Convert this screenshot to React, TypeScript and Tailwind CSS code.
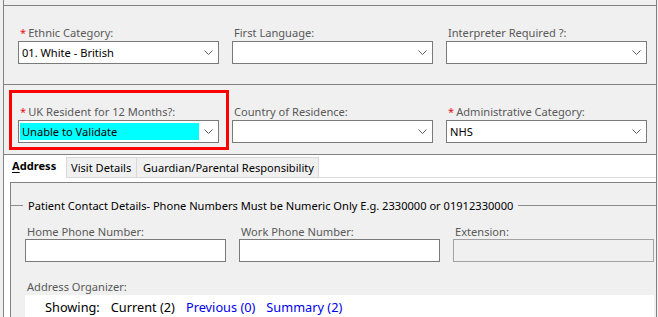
import React from "react";

function Chevron() {
  return (
    <svg width="9" height="5" viewBox="0 0 9 5" className="shrink-0">
      <polyline points="0.5,0.5 4.5,4.5 8.5,0.5" fill="none" stroke="#606060" strokeWidth="1" />
    </svg>
  );
}

function SelectField({
  label,
  required,
  value,
  highlight,
}: {
  label: string;
  required?: boolean;
  value?: string;
  highlight?: boolean;
}) {
  return (
    <div className="flex flex-col">
      <div className="h-[15px] leading-[15px] pl-[2px] text-[#595959] whitespace-nowrap">
        {required && <span className="text-[#e81123] mr-[2px]">*</span>}
        {label}
      </div>
      <div className="mt-[1px] h-[23px] border border-[#7a7a7a] bg-white flex items-center">
        <div
          className={
            "ml-[1px] w-[179px] h-[17px] leading-[17px] pl-[2px] text-black whitespace-nowrap " +
            (highlight ? "bg-[#00ffff]" : "")
          }
        >
          {value}
        </div>
        <div className="flex-1 flex justify-center">
          <Chevron />
        </div>
      </div>
    </div>
  );
}

function TextField({ label, disabled }: { label: string; disabled?: boolean }) {
  return (
    <div className="flex flex-col">
      <div className="h-[15px] leading-[15px] pl-[2px] text-[#595959] whitespace-nowrap">{label}</div>
      <div
        className={
          "h-[23px] border " +
          (disabled ? "bg-[#f0f0f0] border-[#a3a3a3]" : "bg-white border-[#7a7a7a]")
        }
      />
    </div>
  );
}

export default function App() {
  return (
    <div className="w-[658px] h-[317px] overflow-hidden bg-[#f0f0f0] font-['Noto_Sans',sans-serif] text-[11.1px]">
      <div className="ml-[3px] w-[654px] h-full border-x border-[#828282] pt-[5px] flex flex-col">
        {/* row 1 */}
        <div className="h-[79px] shrink-0 border-t border-[#828282] pl-[14px] pt-[19px] grid grid-cols-[201px_201px_201px] gap-x-[13px] content-start">
          <SelectField label="Ethnic Category:" required value="01. White - British" />
          <SelectField label="First Language:" />
          <SelectField label="Interpreter Required ?:" />
        </div>

        {/* row 2 */}
        <div className="h-[70px] shrink-0 border-t border-[#828282] pl-[14px] pt-[19px] grid grid-cols-[201px_201px_201px] gap-x-[13px] content-start">
          <div className="relative">
            <SelectField label="UK Resident for 12 Months?:" required value="Unable to Validate" highlight />
            <div className="absolute left-[-9px] right-[-10px] top-[-14px] bottom-[-7px] border-[3px] border-[#ff0000] pointer-events-none" />
          </div>
          <SelectField label="Country of Residence:" />
          <SelectField label="Administrative Category:" required value="NHS" />
        </div>

        {/* tabs */}
        <div className="flex-1 border-t border-[#828282] bg-white flex flex-col">
          <div className="h-[23px] shrink-0 flex items-end">
            <div className="w-[62px] h-full bg-white pl-[8px] leading-[21px] font-bold text-black">
              <span className="underline underline-offset-2">A</span>ddress
            </div>
            <div className="h-[21px] border border-[#d9d9d9] bg-[#f0f0f0] px-[4px] leading-[19px] text-black whitespace-nowrap w-[71px]">
              Visit Details
            </div>
            <div className="h-[21px] border border-l-0 border-[#d9d9d9] bg-[#f0f0f0] px-[6px] leading-[19px] text-black whitespace-nowrap w-[182px]">
              Guardian/Parental Responsibility
            </div>
            <div className="flex-1 border-b border-[#d9d9d9]" />
          </div>

          <div className="mt-[4px] ml-[6px] flex-1 border-t border-l border-[#828282] bg-[#f0f0f0] flex flex-col">
            {/* legend */}
            <div className="mt-[15px] h-[15px] flex items-center">
              <div className="w-[12px] h-px bg-[#8c8c8c]" />
              <div className="px-[5px] leading-[15px] text-black whitespace-nowrap">
                Patient Contact Details- Phone Numbers Must be Numeric Only E.g. 2330000 or 01912330000
              </div>
              <div className="flex-1 h-px bg-[#8c8c8c]" />
            </div>

            <div className="mt-[11px] pl-[14px] grid grid-cols-[201px_201px_201px] gap-x-[13px]">
              <TextField label="Home Phone Number:" />
              <TextField label="Work Phone Number:" />
              <TextField label="Extension:" disabled />
            </div>

            <div className="mt-[17px] pl-[16px] h-[15px] leading-[15px] text-[#595959]">Address Organizer:</div>

            <div className="mt-[1px] ml-[14px] w-[629px] flex-1 bg-white pl-[20px] pt-[3px] flex gap-[11px] text-[12.75px] leading-[18px] whitespace-nowrap">
              <span className="text-black">Showing:</span>
              <span className="text-black">Current (2)</span>
              <span className="text-[#0000ee]">Previous (0)</span>
              <span className="text-[#0000ee]">Summary (2)</span>
            </div>
          </div>
        </div>
      </div>
    </div>
  );
}
